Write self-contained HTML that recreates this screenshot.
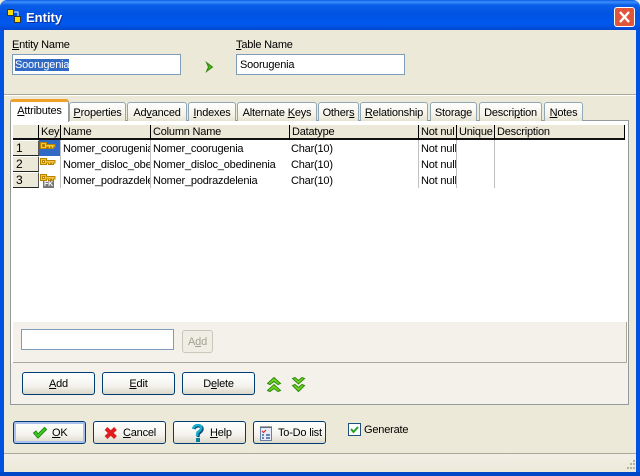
<!DOCTYPE html>
<html><head><meta charset="utf-8"><style>
html,body{margin:0;padding:0;background:#fff}
#w{position:relative;width:640px;height:476px;overflow:hidden;background:#ece9d8;font:11px "Liberation Sans",sans-serif;letter-spacing:-.2px;color:#000}
#w div,#w span.a{position:absolute;white-space:nowrap;box-sizing:border-box}
u{text-decoration:underline}
.inp{background:#fff;border:1px solid #7f9db9;height:21px;line-height:20px;padding-left:2px}
.tab{top:102px;height:19px;background:linear-gradient(#fff,#f3f1e6 70%,#e6e3d2);border:1px solid #91a7b4;border-bottom:none;border-radius:3px 3px 0 0;text-align:center;line-height:20px}
.hd{top:125px;height:15px;background:#ece9d8;line-height:15px;padding-left:2px;border-right:1px solid #000;border-bottom:2px solid #111;overflow:hidden}
.rh{left:13px;width:26px;height:16px;background:#ece9d8;border-right:1px solid #555;border-bottom:1px solid #222;border-top:1px solid #fff;padding-left:3px;line-height:15px;font-size:12px}
.c{height:16px;line-height:18px;padding-left:2px;overflow:hidden}
.v{top:140px;height:48px;width:1px;background:#c0c0c0}
.btn{height:23px;width:73px;border:1px solid #003c74;border-radius:3px;background:linear-gradient(#fff,#f4f3ee 60%,#dcd8c9);text-align:center;line-height:23px}
.bl{text-align:left}
</style></head><body><div id="w">
<div style="left:0;top:0;width:640px;height:30px;background:linear-gradient(#0a5ae6 0,#3d8ffb 2px,#0a5fe8 5px,#0054e3 14px,#0058ee 24px,#0048cf 30px);border-radius:7px 7px 0 0"></div>
<div style="left:0;top:30px;width:4px;height:446px;background:#0053e1"></div>
<div style="left:636px;top:30px;width:4px;height:446px;background:#0053e1"></div>
<div style="left:0;top:472px;width:640px;height:4px;background:#0047c8"></div>
<svg style="position:absolute;left:6px;top:8px" width="16" height="16"><path d="M7 4h5v6" fill="none" stroke="#eee"/><rect x="1.5" y="1.500" width="6" height="6" fill="#fd0" stroke="#333"/><rect x="8.500" y="8.500" width="6" height="6" fill="#fd0" stroke="#333"/></svg>
<div style="left:26px;top:10px;color:#fff;font:bold 13px 'Liberation Sans',sans-serif;line-height:16px;text-shadow:1px 1px 0 #0a2f9a;letter-spacing:0">Entity</div>
<div style="left:614px;top:7px;width:21px;height:20px;background:#e0563a;border:1px solid #fff;border-radius:3px"></div>
<svg style="position:absolute;left:614px;top:7px" width="21" height="20"><path d="M6 5l9 10M15 5l-9 10" stroke="#fff" stroke-width="2.4"/></svg>

<div style="left:12px;top:39px"><u>E</u>ntity Name</div>
<div style="left:236px;top:39px"><u>T</u>able Name</div>
<div class="inp" style="left:12px;top:54px;width:169px"><span style="background:#316ac5;color:#fff">Soorugenia</span></div>
<div class="inp" style="left:236px;top:54px;width:169px;padding-left:3px">Soorugenia</div>
<svg style="position:absolute;left:205px;top:61px" width="10" height="12"><path d="M1.5 1.5L7.5 6L1.5 10.5L3.5 6Z" fill="#4fb31a" stroke="#2d8a0e"/></svg>
<div style="left:4px;top:94px;width:632px;height:1px;background:#aca899"></div>
<div style="left:4px;top:95px;width:632px;height:1px;background:#fff"></div>

<div style="left:10px;top:120px;width:619px;height:285px;background:#fff;border:1px solid #919b9c"></div>
<div style="left:13px;top:322px;width:614px;height:41px;background:#f3f1ea"></div>
<div style="left:11px;top:363px;width:617px;height:41px;background:#f3f1ea"></div>
<div style="left:13px;top:362px;width:614px;height:1px;background:#aca899"></div>
<div style="left:626px;top:322px;width:1px;height:41px;background:#aca899"></div>

<div class="tab" style="left:69px;width:57px"><u>P</u>roperties</div>
<div class="tab" style="left:127px;width:60px">Ad<u>v</u>anced</div>
<div class="tab" style="left:188px;width:48px"><u>I</u>ndexes</div>
<div class="tab" style="left:237px;width:80px">Alternate <u>K</u>eys</div>
<div class="tab" style="left:318px;width:41px">Other<u>s</u></div>
<div class="tab" style="left:360px;width:68px"><u>R</u>elationship</div>
<div class="tab" style="left:430px;width:47px">Stora<u>g</u>e</div>
<div class="tab" style="left:479px;width:63px">Descri<u>p</u>tion</div>
<div class="tab" style="left:544px;width:39px"><u>N</u>otes</div>
<div style="left:10px;top:99px;width:59px;height:23px;background:#fff;border:1px solid #919b9c;border-bottom:none;border-top:3px solid #f2a02c;border-radius:3px 3px 0 0;text-align:center;line-height:18px"><u>A</u>ttributes</div>

<div class="hd" style="left:13px;width:26px;padding:0"></div>
<div class="hd" style="left:39px;width:22px">Key</div>
<div class="hd" style="left:61px;width:90px">Name</div>
<div class="hd" style="left:151px;width:139px">Column Name</div>
<div class="hd" style="left:290px;width:129px">Datatype</div>
<div class="hd" style="left:419px;width:38px">Not nul</div>
<div class="hd" style="left:457px;width:38px">Unique</div>
<div class="hd" style="left:495px;width:130px">Description</div>

<div class="rh" style="top:140px">1</div>
<div class="rh" style="top:156px">2</div>
<div class="rh" style="top:172px">3</div>
<div style="left:39px;top:140px;width:21px;height:16px;background:#316ac5"></div>
<svg style="position:absolute;left:39px;top:140px" width="22" height="48">
<g fill="#f6c63c" stroke="#b88400"><path fill-rule="evenodd" d="M1.500 2.500h6v2h8.500v2.500h-1.500v1.500h-2v-1.500h-1v1.500h-2v-1.500h-2v1.500h-6zM3.500 4.500v2h2v-2z"/>
<path fill-rule="evenodd" d="M1.500 18.500h6v2h8.500v2.500h-1.500v1.500h-2v-1.500h-1v1.500h-2v-1.500h-2v1.500h-6zM3.500 20.500v2h2v-2z"/>
<path fill-rule="evenodd" d="M1.500 34.500h6v2h8.500v2.500h-1.500v1.500h-2v-1.500h-1v1.500h-2v-1.500h-2v1.500h-6zM3.500 36.500v2h2v-2z"/></g>
<rect x="4" y="41" width="11" height="7" fill="#777"/></svg>
<div style="left:44px;top:181px;width:12px;height:8px;color:#fff;font:bold 7px/8px 'Liberation Sans',sans-serif">FK</div>

<div class="c" style="left:61px;top:140px;width:90px">Nomer_coorugenia</div>
<div class="c" style="left:61px;top:156px;width:90px">Nomer_disloc_obedinenia</div>
<div class="c" style="left:61px;top:172px;width:90px">Nomer_podrazdelenia</div>
<div class="c" style="left:151px;top:140px;width:139px">Nomer_coorugenia</div>
<div class="c" style="left:151px;top:156px;width:139px">Nomer_disloc_obedinenia</div>
<div class="c" style="left:151px;top:172px;width:139px">Nomer_podrazdelenia</div>
<div class="c" style="left:289px;top:140px">Char(10)</div>
<div class="c" style="left:289px;top:156px">Char(10)</div>
<div class="c" style="left:289px;top:172px">Char(10)</div>
<div class="c" style="left:419px;top:140px;width:38px">Not null</div>
<div class="c" style="left:419px;top:156px;width:38px">Not null</div>
<div class="c" style="left:419px;top:172px;width:38px">Not null</div>
<div class="v" style="left:60px"></div><div class="v" style="left:150px"></div><div class="v" style="left:418px"></div><div class="v" style="left:456px"></div><div class="v" style="left:494px"></div>

<div class="inp" style="left:21px;top:329px;width:153px"></div>
<div style="left:182px;top:330px;width:31px;height:23px;border:1px solid #c9c7ba;border-radius:3px;background:#f0eee4;color:#a1a192;text-align:center;line-height:23px">A<u>d</u>d</div>

<div class="btn" style="left:22px;top:372px"><u>A</u>dd</div>
<div class="btn" style="left:102px;top:372px"><u>E</u>dit</div>
<div class="btn" style="left:182px;top:372px">D<u>e</u>lete</div>
<svg style="position:absolute;left:267px;top:377px" width="40" height="16">
<g fill="#6fd41e" stroke="#2d8a0e"><path d="M0.500 6.500L7 0.500L13.500 6.500L11 7.500L7 4.500L3 7.500Z"/><path d="M0.500 13.500L7 7.500L13.500 13.500L11 14.500L7 11.500L3 14.500Z"/>
<path d="M25.500 1.500L31.500 7L37.500 1.500L35 0.500L31.500 3.500L28 0.500Z"/><path d="M25.500 8.500L31.500 14.500L37.500 8.500L35 7.500L31.500 10.500L28 7.500Z"/></g></svg>

<div class="btn bl" style="left:13px;top:421px;padding-left:38px;box-shadow:inset 0 0 0 2px #a9c0ee"><u>O</u>K</div>
<div class="btn bl" style="left:93px;top:421px;padding-left:29px"><u>C</u>ancel</div>
<div class="btn bl" style="left:173px;top:421px;padding-left:36px"><u>H</u>elp</div>
<div class="btn bl" style="left:253px;top:421px;padding-left:24px">To-Do list</div>
<svg style="position:absolute;left:32px;top:426px" width="16" height="14"><path d="M1.500 7L6 12L14.500 3.500L12.500 1.500L6 8L4 5Z" fill="#3ed020" stroke="#1f8a10"/></svg>
<svg style="position:absolute;left:104px;top:426px" width="14" height="14"><path d="M2 2.500L11.500 11.500M11.500 2.500L2 11.500" stroke="#e01c1c" stroke-width="4"/></svg>
<svg style="position:absolute;left:191px;top:424px" width="14" height="20"><path d="M3 5Q4 2 8 2Q12 2.500 11 6Q10 8 7.500 9.500L7 13" fill="none" stroke="#0a3f80" stroke-width="3"/><path d="M2 5Q3 1 7.500 1Q11 1.500 10 5Q9 7 6.500 8.500L6 12" fill="none" stroke="#14b0c8" stroke-width="2.500"/><rect x="5" y="14" width="4" height="4" fill="#0a7f9a"/></svg>
<svg style="position:absolute;left:259px;top:425px" width="14" height="17"><rect x="1.500" y="2.500" width="11" height="13" fill="#e8ecf8" stroke="#6a7fa8"/><path d="M2 1v2M4 1v2M6 1v2M8 1v2M10 1v2M12 1v2" stroke="#555"/><path d="M3 6l1.500 1.500L7 5" fill="none" stroke="#d02020"/><path d="M3 10h2M7 10h4M3 13h2M7 13h4" stroke="#4060a0" stroke-width="1.500"/></svg>

<div style="left:348px;top:423px;width:13px;height:13px;border:1px solid #1c5180;background:#fff"></div>
<svg style="position:absolute;left:348px;top:423px" width="13" height="13"><path d="M3 6l2.500 3L10 4" fill="none" stroke="#21a121" stroke-width="2"/></svg>
<div style="left:364px;top:424px">Generate</div>

<div style="left:4px;top:453px;width:632px;height:1px;background:#aca899"></div>
<div style="left:4px;top:454px;width:632px;height:18px;background:linear-gradient(#f2f0e6,#ece9d8)"></div>
<svg style="position:absolute;left:624px;top:459px" width="12" height="12" fill="#b5b29f"><rect x="9" y="1" width="2" height="2"/><rect x="6" y="4" width="2" height="2"/><rect x="9" y="4" width="2" height="2"/><rect x="3" y="8" width="2" height="2"/><rect x="6" y="8" width="2" height="2"/><rect x="9" y="8" width="2" height="2"/></svg>
</div></body></html>
